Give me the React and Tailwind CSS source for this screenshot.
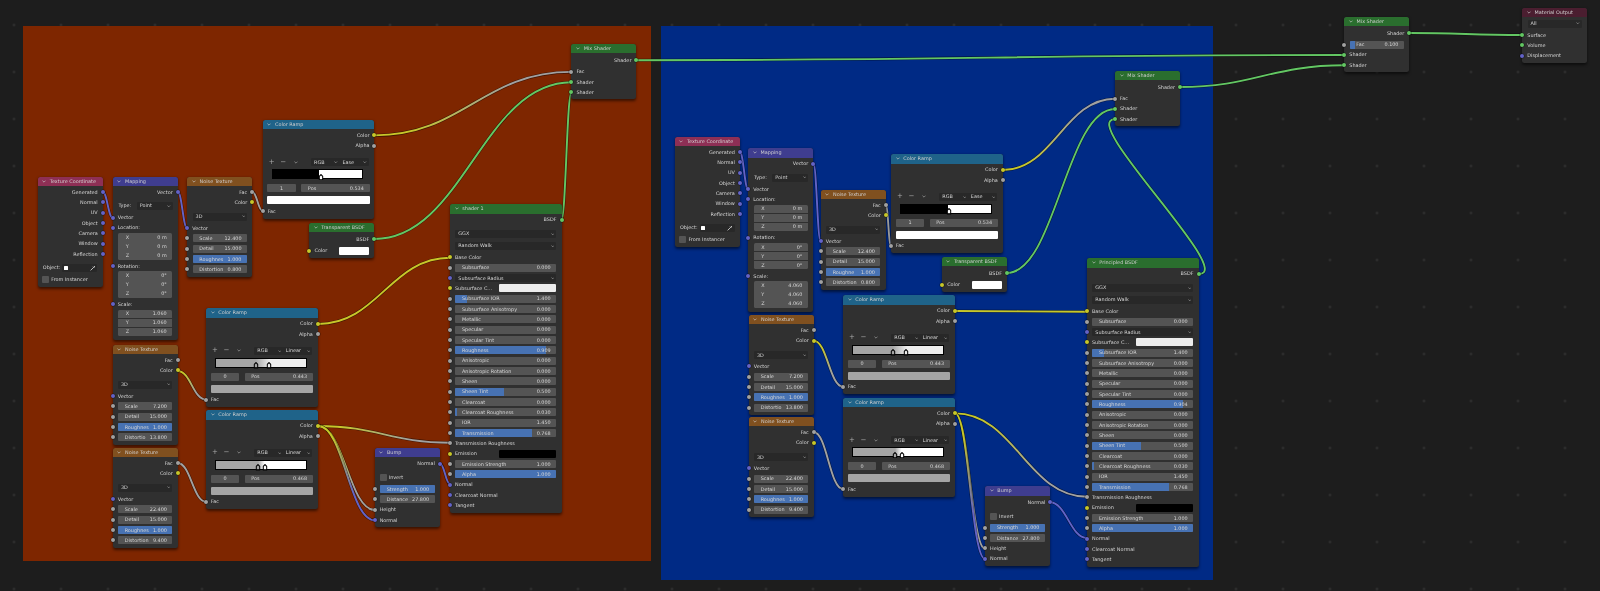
import React from "react";

const GRAY = "bg-[#a1a1a1]";
const YELLOW = "bg-[#c7c729]";
const BLUE = "bg-[#6363c7]";
const GREEN = "bg-[#63c763]";

const C = { g: "#a1a1a1", y: "#c7c729", b: "#6363c7", s: "#63c763" };

// x1, y1, x2, y2, start colour, end colour
const WIRES = [
  [102.7, 192, 112.7, 217.7, C.b, C.b],
  [177.7, 192, 187.3, 228.3, C.b, C.b],
  [252.3, 192, 262.7, 211.1, C.g, C.g],
  [374.3, 135.4, 571.4, 71.9, C.y, C.g],
  [374.3, 239, 571.4, 82.2, C.s, C.s],
  [561.3, 220, 571.4, 92.5, C.s, C.s],
  [318.3, 324, 450, 257.7, C.y, C.y],
  [177.7, 371, 206, 399.7, C.y, C.g],
  [177.7, 463, 206, 501.7, C.g, C.g],
  [318.3, 426, 450, 442.7, C.y, C.g],
  [318.3, 426, 374.7, 510, C.y, C.g],
  [318.3, 426, 374.7, 520.3, C.y, C.b],
  [440, 463.7, 450, 484, C.b, C.b],
  [636.4, 60.2, 1344.3, 55, C.s, C.s],
  [1409, 33, 1522.3, 35, C.s, C.s],
  [739.7, 152, 748.3, 189.3, C.b, C.b],
  [813.3, 163.6, 820.7, 241.3, C.b, C.b],
  [885.7, 205, 891, 245.7, C.g, C.g],
  [1003, 170, 1115, 98.7, C.y, C.g],
  [1006.7, 273, 1115, 109, C.s, C.s],
  [1199, 274, 1115, 119.3, C.s, C.s],
  [1180, 87, 1344.3, 65.3, C.s, C.s],
  [955, 311, 1087, 311.7, C.y, C.y],
  [813.7, 340.6, 843, 386.7, C.y, C.g],
  [813.7, 432.3, 843, 489, C.g, C.g],
  [955, 413.4, 1087, 496.7, C.y, C.g],
  [955, 413.4, 985, 548.6, C.y, C.g],
  [955, 413.4, 985, 558.9, C.y, C.b],
  [1049.7, 502.3, 1087, 538, C.b, C.b],
];

const Wires = () => (
  <svg className="absolute inset-0" width="1600" height="591" fill="none">
    <defs>
      {WIRES.map(([x1, y1, x2, y2, a, b], i) => (
        <linearGradient key={i} id={`w${i}`} gradientUnits="userSpaceOnUse" x1={x1} y1={y1} x2={x2} y2={y2}>
          <stop offset="0.15" stopColor={a} />
          <stop offset="0.7" stopColor={b} />
        </linearGradient>
      ))}
    </defs>
    {WIRES.map(([x1, y1, x2, y2], i) => {
      const h = Math.abs(x2 - x1) * 0.45;
      const d = `M${x1} ${y1}C${x1 + h} ${y1} ${x2 - h} ${y2} ${x2} ${y2}`;
      return (
        <g key={i}>
          <path d={d} stroke="#000" strokeOpacity="0.5" strokeWidth="3" />
          <path d={d} stroke={`url(#w${i})`} strokeWidth="1.9" />
        </g>
      );
    })}
  </svg>
);

const Chevron = ({ className = "w-[4px] h-[3px] text-[#c8c8c8]" }) => (
  <svg viewBox="0 0 6 4" fill="none" stroke="currentColor" strokeWidth="1" className={className}>
    <path d="M0.7 0.7 L3 3 L5.3 0.7" />
  </svg>
);

const Socket = ({ color, right }) => (
  <span
    className={`absolute top-1/2 size-[4px] -translate-y-1/2 rounded-full shadow-[0_0_0_0.5px_rgba(0,0,0,0.45)] ${color} ${
      right ? "right-[-2px]" : "left-[-2px]"
    }`}
  />
);

const Node = ({ title, head, pos, children }) => (
  <div className={`absolute rounded-[2.5px] bg-[#303030] shadow-[0_1.5px_3px_rgba(0,0,0,0.55)] ${pos}`}>
    <div className={`flex h-[9.3px] items-center gap-[3.6px] rounded-t-[2.5px] pl-[4.7px] text-[#cfcfcf] ${head}`}>
      <Chevron />
      <span>{title}</span>
    </div>
    {children}
  </div>
);

const Out = ({ label, color = GRAY }) => (
  <div className="relative flex h-[10.33px] items-center justify-end pr-[5px]">
    <span>{label}</span>
    <Socket color={color} right />
  </div>
);

const In = ({ label, color = GRAY }) => (
  <div className="relative flex h-[10.33px] items-center pl-[5px]">
    <span>{label}</span>
    <Socket color={color} />
  </div>
);

const Slider = ({ label, value, fill = "w-0", color = GRAY, inset = "mx-[5.3px]" }) => (
  <div className="relative flex h-[10.33px] items-center">
    {color && <Socket color={color} />}
    <div className={`relative flex h-[8px] flex-1 items-center justify-between overflow-hidden rounded-[1px] bg-[#545454] pl-[6.7px] pr-[5.5px] ${inset}`}>
      <div className={`absolute inset-y-0 left-0 bg-[#4772b3] ${fill}`} />
      <span className="relative">{label}</span>
      <span className="relative">{value}</span>
    </div>
  </div>
);

const Dropdown = ({ label, color, className = "mx-[5.3px] flex-1" }) => (
  <div className="relative flex h-[10.33px] items-center">
    {color && <Socket color={color} />}
    <div className={`flex h-[8px] items-center justify-between rounded-[1px] bg-[#282828] pl-[3px] pr-[2px] ${className}`}>
      <span>{label}</span>
      <Chevron className="w-[3.5px] h-[2.5px] text-[#b0b0b0]" />
    </div>
  </div>
);

const Vec3 = ({ values }) => (
  <div className="mx-[5.5px] flex flex-col gap-[0.5px] overflow-hidden rounded-[1.5px]">
    {values.map(([axis, value]) => (
      <div key={axis} className="flex h-[8.5px] items-center justify-between bg-[#545454] pl-[7.5px] pr-[5.5px]">
        <span>{axis}</span>
        <span>{value}</span>
      </div>
    ))}
  </div>
);

const TextureCoordinate = ({ pos }) => (
  <Node title="Texture Coordinate" head="bg-[#8e2f55]" pos={`w-[65.2px] h-[110px] ${pos}`}>
    <div className="h-[0.85px]" />
    {["Generated", "Normal", "UV", "Object", "Camera", "Window", "Reflection"].map((l) => (
      <Out key={l} label={l} color={BLUE} />
    ))}
    <div className="h-[3.3px]" />
    <div className="flex h-[10.33px] items-center pl-[5.3px]">
      <span className="w-[19.7px]">Object:</span>
      <div className="flex h-[8px] w-[35px] items-center justify-between rounded-[1px] bg-[#282828] px-[1.5px]">
        <span className="size-[4px] rounded-[0.5px] bg-white" />
        <svg viewBox="0 0 6 6" className="size-[6px] text-[#d0d0d0]" fill="none" stroke="currentColor" strokeWidth="0.9">
          <path d="M0.6 5.4 L3.6 2.4 M3 1.6 L4.4 3 M3.8 2.2 L5 1" />
        </svg>
      </div>
    </div>
    <div className="h-[1.6px]" />
    <div className="flex h-[10.33px] items-center gap-[2px] pl-[4.7px]">
      <span className="size-[7px] rounded-[1px] bg-[#545454]" />
      <span>From Instancer</span>
    </div>
  </Node>
);

const Mapping = ({ pos, scale }) => (
  <Node title="Mapping" head="bg-[#3f3d8f]" pos={`w-[65px] h-[163.3px] ${pos}`}>
    <div className="h-[0.85px]" />
    <Out label="Vector" color={BLUE} />
    <div className="h-[3.6px]" />
    <div className="flex h-[10.33px] items-center pl-[5.7px]">
      <span className="w-[18.3px]">Type:</span>
      <div className="flex h-[8px] w-[36px] items-center justify-between rounded-[1px] bg-[#282828] pl-[3px] pr-[2px]">
        <span>Point</span>
        <Chevron className="w-[3.5px] h-[2.5px] text-[#b0b0b0]" />
      </div>
    </div>
    <div className="h-[1.3px]" />
    <In label="Vector" color={BLUE} />
    <In label="Location:" color={BLUE} />
    <Vec3 values={[["X", "0 m"], ["Y", "0 m"], ["Z", "0 m"]]} />
    <div className="h-[1.3px]" />
    <In label="Rotation:" color={BLUE} />
    <Vec3 values={[["X", "0°"], ["Y", "0°"], ["Z", "0°"]]} />
    <div className="h-[1.6px]" />
    <In label="Scale:" color={BLUE} />
    <Vec3 values={[["X", scale], ["Y", scale], ["Z", scale]]} />
  </Node>
);

const NoiseTexture = ({ pos, scale, distortion, rough = "Roughnes", dist = "Distortion" }) => (
  <Node title="Noise Texture" head="bg-[#80501f]" pos={`w-[65px] h-[100px] ${pos}`}>
    <div className="h-[0.85px]" />
    <Out label="Fac" />
    <Out label="Color" color={YELLOW} />
    <div className="h-[4px]" />
    <Dropdown label="3D" />
    <div className="h-[1.2px]" />
    <In label="Vector" color={BLUE} />
    <Slider label="Scale" value={scale} />
    <Slider label="Detail" value="15.000" />
    <Slider label={rough} value="1.000" fill="w-full" />
    <Slider label={dist} value={distortion} />
  </Node>
);

const Handle = ({ pos, fill }) => (
  <svg viewBox="0 0 6 8" className={`absolute bottom-[-2px] h-[6.5px] w-[5px] -translate-x-1/2 ${pos}`}>
    <path d="M3 0.8 L5.2 3 V7.2 H0.8 V3 Z" fill={fill} stroke="#000" strokeWidth="1.5" />
  </svg>
);

const ColorRamp = ({ pos, mode, gradient, index, value, bar, handles }) => (
  <Node title="Color Ramp" head="bg-[#1f6389]" pos={`w-[111.8px] h-[99px] ${pos}`}>
    <div className="h-[1.2px]" />
    <Out label="Color" color={YELLOW} />
    <Out label="Alpha" />
    <div className="h-[6.5px]" />
    <div className="flex h-[10px] items-center pl-[6px]">
      <span className="w-[11.5px] text-[7px] leading-none text-[#a8a8a8]">+</span>
      <span className="w-[11.5px] text-[7px] leading-none text-[#a8a8a8]">−</span>
      <span className="w-[19.3px] pl-[2px]">
        <Chevron className="w-[4px] h-[3px] text-[#a8a8a8]" />
      </span>
      <div className="flex h-[8px] w-[58px] rounded-[1px] bg-[#282828]">
        <div className="flex w-[29px] items-center justify-between pl-[3px] pr-[2px]">
          <span>RGB</span>
          <Chevron className="w-[3.5px] h-[2.5px] text-[#b0b0b0]" />
        </div>
        <div className="flex w-[29px] items-center justify-between pl-[2.5px] pr-[2px]">
          <span>{mode}</span>
          <Chevron className="w-[3.5px] h-[2.5px] text-[#b0b0b0]" />
        </div>
      </div>
    </div>
    <div className="h-[2px]" />
    <div className={`relative ml-[9px] h-[10px] w-[91.7px] border border-black ${gradient}`}>{handles}</div>
    <div className="h-[4.7px]" />
    <div className="flex h-[8px] gap-[5.4px] px-[4.7px]">
      <div className="flex w-[28.6px] items-center justify-center rounded-[1px] bg-[#545454]">{index}</div>
      <div className="flex flex-1 items-center justify-between rounded-[1px] bg-[#545454] pl-[6.5px] pr-[6px]">
        <span>Pos</span>
        <span>{value}</span>
      </div>
    </div>
    <div className="h-[4px]" />
    <div className={`mx-[4.7px] h-[8px] rounded-[1px] ${bar}`} />
    <div className="h-[1.8px]" />
    <In label="Fac" />
  </Node>
);

const TransparentBSDF = ({ pos }) => (
  <Node title="Transparent BSDF" head="bg-[#2a6e2e]" pos={`w-[65.3px] h-[35.3px] ${pos}`}>
    <div className="h-[1.5px]" />
    <Out label="BSDF" color={GREEN} />
    <div className="h-[1.3px]" />
    <div className="relative flex h-[10.33px] items-center justify-between pl-[5.5px] pr-[5.3px]">
      <Socket color={YELLOW} />
      <span>Color</span>
      <span className="h-[8px] w-[30px] rounded-[1px] bg-white" />
    </div>
  </Node>
);

const Principled = ({ pos, title, roughness, roughFill }) => {
  const top = [
    ["Subsurface IOR", "1.400", "w-[11.5%]"],
    ["Subsurface Anisotropy", "0.000"],
    ["Metallic", "0.000"],
    ["Specular", "0.000"],
    ["Specular Tint", "0.000"],
    ["Roughness", roughness, roughFill],
    ["Anisotropic", "0.000"],
    ["Anisotropic Rotation", "0.000"],
    ["Sheen", "0.000"],
    ["Sheen Tint", "0.500", "w-[48.5%]"],
    ["Clearcoat", "0.000"],
    ["Clearcoat Roughness", "0.030", "w-[1.5%]"],
    ["IOR", "1.450"],
    ["Transmission", "0.768", "w-[76%]"],
  ];
  return (
    <Node title={title} head="bg-[#2a6e2e]" pos={`w-[111.5px] h-[309px] ${pos}`}>
      <div className="h-[1.2px]" />
      <Out label="BSDF" color={GREEN} />
      <div className="h-[3.6px]" />
      <Dropdown label="GGX" />
      <div className="h-[1.6px]" />
      <Dropdown label="Random Walk" />
      <div className="h-[1.3px]" />
      <In label="Base Color" color={YELLOW} />
      <Slider label="Subsurface" value="0.000" />
      <Dropdown label="Subsurface Radius" color={BLUE} />
      <div className="relative flex h-[10.33px] items-center justify-between pl-[5px] pr-[5.3px]">
        <Socket color={YELLOW} />
        <span>Subsurface C...</span>
        <span className="h-[8px] w-[57.7px] rounded-[1px] bg-[#ededed]" />
      </div>
      {top.map(([label, value, fill]) => (
        <Slider key={label} label={label} value={value} fill={fill} />
      ))}
      <In label="Transmission Roughness" />
      <div className="relative flex h-[10.33px] items-center justify-between pl-[5px] pr-[5.3px]">
        <Socket color={YELLOW} />
        <span>Emission</span>
        <span className="h-[8px] w-[57.7px] rounded-[1px] bg-black" />
      </div>
      <Slider label="Emission Strength" value="1.000" />
      <Slider label="Alpha" value="1.000" fill="w-full" />
      <In label="Normal" color={BLUE} />
      <In label="Clearcoat Normal" color={BLUE} />
      <In label="Tangent" color={BLUE} />
    </Node>
  );
};

const Bump = ({ pos }) => (
  <Node title="Bump" head="bg-[#3f3d8f]" pos={`w-[65.3px] h-[79.3px] ${pos}`}>
    <div className="h-[1.5px]" />
    <Out label="Normal" color={BLUE} />
    <div className="h-[3.6px]" />
    <div className="flex h-[10.33px] items-center gap-[2px] pl-[5px]">
      <span className="size-[7px] rounded-[1px] bg-[#545454]" />
      <span>Invert</span>
    </div>
    <div className="h-[1.2px]" />
    <Slider label="Strength" value="1.000" fill="w-full" />
    <Slider label="Distance" value="27.800" />
    <In label="Height" />
    <In label="Normal" color={BLUE} />
  </Node>
);

// the Fac input only shows a slider when nothing is linked to it
const MixShader = ({ pos, value, fill }) => (
  <Node title="Mix Shader" head="bg-[#2a6e2e]" pos={`w-[65px] h-[55px] ${pos}`}>
    <div className="h-[1.5px]" />
    <Out label="Shader" color={GREEN} />
    <div className="h-[1.3px]" />
    {value ? <Slider label="Fac" value={value} fill={fill} /> : <In label="Fac" />}
    <In label="Shader" color={GREEN} />
    <In label="Shader" color={GREEN} />
  </Node>
);

const App = () => (
  <div className="relative h-[591px] w-[1600px] overflow-hidden bg-[#1d1d1d] bg-[radial-gradient(circle,#303030_1px,transparent_1.5px)] bg-[size:47px_47px] bg-[position:-9.5px_1.5px] font-['DejaVu_Sans',sans-serif] text-[4.9px] leading-none text-[#d6d6d6] blur-[0.4px]">
    <div className="absolute left-[23px] top-[26px] h-[535px] w-[628px] bg-[#7e2600]" />
    <div className="absolute left-[661px] top-[26px] h-[554px] w-[552px] bg-[#002a85]" />
    <Wires />

    <TextureCoordinate pos="left-[37.5px] top-[176.7px]" />
    <Mapping pos="left-[112.7px] top-[176.7px]" scale="1.060" />
    <NoiseTexture pos="left-[187.3px] top-[176.7px]" scale="12.400" distortion="0.800" />
    <NoiseTexture pos="left-[112.7px] top-[344.7px]" scale="7.200" distortion="13.800" dist="Distortio" />
    <NoiseTexture pos="left-[112.7px] top-[447.7px]" scale="22.400" distortion="9.400" />
    <ColorRamp
      pos="left-[262.7px] top-[119.7px]"
      mode="Ease"
      gradient="bg-[linear-gradient(90deg,#000_52%,#fff_52%)]"
      index="1"
      value="0.534"
      bar="bg-white"
      handles={<Handle pos="left-[53.4%]" fill="#fff" />}
    />
    <TransparentBSDF pos="left-[309px] top-[223px]" />
    <ColorRamp
      pos="left-[206px] top-[308.3px]"
      mode="Linear"
      gradient="bg-[linear-gradient(90deg,#a5a5a5_44%,#eeeeee_60%)]"
      index="0"
      value="0.443"
      bar="bg-[#a5a5a5]"
      handles={
        <>
          <Handle pos="left-[44.3%]" fill="#a5a5a5" />
          <Handle pos="left-[59.5%]" fill="#eeeeee" />
        </>
      }
    />
    <ColorRamp
      pos="left-[206px] top-[410.3px]"
      mode="Linear"
      gradient="bg-[linear-gradient(90deg,#a5a5a5_46.8%,#fff_54%)]"
      index="0"
      value="0.468"
      bar="bg-[#a5a5a5]"
      handles={
        <>
          <Handle pos="left-[46.8%]" fill="#a5a5a5" />
          <Handle pos="left-[54.5%]" fill="#fff" />
        </>
      }
    />
    <Principled pos="left-[450px] top-[204.3px]" title="shader 1" roughness="0.909" roughFill="w-[90%]" />
    <Bump pos="left-[374.7px] top-[447.7px]" />
    <MixShader pos="left-[571.4px] top-[44.2px]" />

    <TextureCoordinate pos="left-[674.7px] top-[136.7px]" />
    <Mapping pos="left-[748.3px] top-[148.3px]" scale="4.060" />
    <NoiseTexture pos="left-[820.7px] top-[189.7px]" scale="12.400" distortion="0.800" rough="Roughne" />
    <NoiseTexture pos="left-[748.7px] top-[315px]" scale="7.200" distortion="13.800" dist="Distortio" />
    <NoiseTexture pos="left-[748.7px] top-[417px]" scale="22.400" distortion="9.400" />
    <ColorRamp
      pos="left-[891px] top-[154.3px]"
      mode="Ease"
      gradient="bg-[linear-gradient(90deg,#000_52%,#fff_52%)]"
      index="1"
      value="0.534"
      bar="bg-white"
      handles={<Handle pos="left-[53.4%]" fill="#fff" />}
    />
    <TransparentBSDF pos="left-[941.7px] top-[257px]" />
    <ColorRamp
      pos="left-[843px] top-[295.3px]"
      mode="Linear"
      gradient="bg-[linear-gradient(90deg,#a5a5a5_44%,#eeeeee_60%)]"
      index="0"
      value="0.443"
      bar="bg-[#a5a5a5]"
      handles={
        <>
          <Handle pos="left-[44.3%]" fill="#a5a5a5" />
          <Handle pos="left-[59.5%]" fill="#eeeeee" />
        </>
      }
    />
    <ColorRamp
      pos="left-[843px] top-[397.7px]"
      mode="Linear"
      gradient="bg-[linear-gradient(90deg,#a5a5a5_46.8%,#fff_54%)]"
      index="0"
      value="0.468"
      bar="bg-[#a5a5a5]"
      handles={
        <>
          <Handle pos="left-[46.8%]" fill="#a5a5a5" />
          <Handle pos="left-[54.5%]" fill="#fff" />
        </>
      }
    />
    <Principled pos="left-[1087px] top-[258.3px]" title="Principled BSDF" roughness="0.904" roughFill="w-[89.5%]" />
    <Bump pos="left-[985px] top-[486.3px]" />
    <MixShader pos="left-[1115px] top-[71px]" />

    <MixShader pos="left-[1344.3px] top-[17px]" value="0.100" fill="w-[10%]" />
    <Node title="Material Output" head="bg-[#4b1e30]" pos="left-[1522.3px] top-[8px] h-[55.3px] w-[64.7px]">
      <div className="h-[1.2px]" />
      <Dropdown label="All" />
      <div className="h-[1px]" />
      <In label="Surface" color={GREEN} />
      <In label="Volume" color={GREEN} />
      <In label="Displacement" color={BLUE} />
    </Node>
  </div>
);

export default App;
